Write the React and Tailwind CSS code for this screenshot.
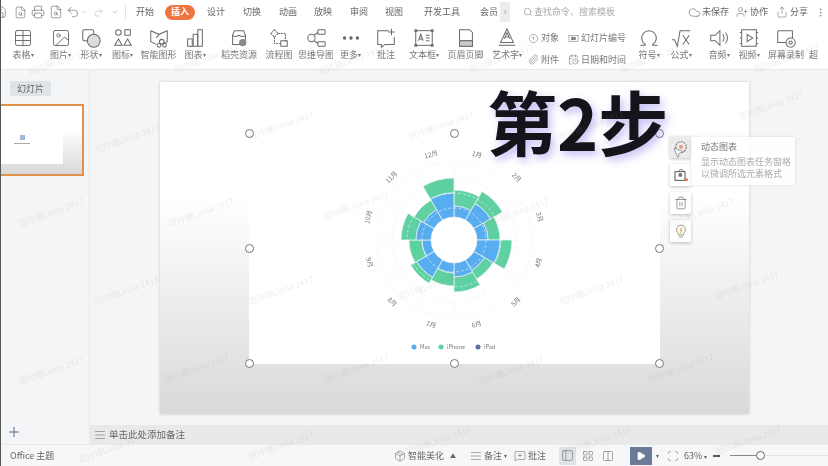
import React from "react";
import { Save, Printer, FileSearch, Undo2, Redo2, ChevronDown, Search, Cloud, UserPlus, Share, MoreVertical, Plus, AlignJustify, Play, Trash2, Table, Image, Omega, MessageSquarePlus, Columns2, LayoutGrid, PanelLeft, Scan, Paperclip, CalendarClock, Package, MousePointer2 } from "lucide-react";

const font = { fontFamily: '"Noto Sans CJK SC","Liberation Sans",sans-serif' };
const S = ({ children, size = 22 }) => (
  <svg width={size} height={size} viewBox="0 0 24 24" fill="none" stroke="#6a6a6a" strokeWidth="1.1">{children}</svg>
);
const L = ({ I, size = 20, cls = "" }) => <I size={size} strokeWidth={1.1} color="#666" className={cls} />;

const icons = {
  shape: <S><rect x="3" y="3" width="12" height="12" rx="1.5" /><circle cx="15" cy="15" r="7" fill="#ddd" /></S>,
  glyphs: <S><circle cx="7" cy="6" r="3" /><rect x="14" y="3" width="6" height="6" /><path d="M7 13l4 7H3zM17 13l4 7h-8z" /></S>,
  smart: <S><path d="M3 4l9 4 9-4v12l-6 3M3 4v12l6 3M12 8l-3 4" /><circle cx="15" cy="16" r="2.5" /><circle cx="12" cy="20" r="2" /><circle cx="18" cy="20" r="2" /></S>,
  bars: <S><rect x="4" y="13" width="5" height="8" /><rect x="10" y="8" width="5" height="13" /><rect x="15" y="3" width="5" height="18" /></S>,
  shell: <S><path d="M5 9l2-5h10l2 5v10H5zM5 9c2 2 4 2 7 0 3 2 5 2 7 0" /><circle cx="16" cy="17" r="4" fill="#8a8a8a" stroke="none" /></S>,
  flow: <S><path d="M7 3l4 4-4 4-4-4zM11 7h8v9M7 11v7h8" strokeDasharray="2 1" /><rect x="14" y="15" width="7" height="6" /></S>,
  mind: <S><circle cx="7" cy="12" r="4" /><rect x="14" y="3" width="8" height="5" rx="1" /><rect x="14" y="16" width="8" height="5" rx="1" /><path d="M10 9l4-3M10 15l4 3" /></S>,
  more: <S><circle cx="5" cy="12" r="1.3" fill="#666" /><circle cx="12" cy="12" r="1.3" fill="#666" /><circle cx="19" cy="12" r="1.3" fill="#666" /></S>,
  note: <S><path d="M15 4H3v15h4v3l4-3h10v-8M18 2v7M14.5 5.5h7" /></S>,
  textbox: <S><rect x="3" y="4" width="18" height="16" /><path d="M6 15l2.5-7 2.5 7M7 13h3M14 9h4M14 12h4M14 15h4" /><path d="M2 3h2v2H2zM20 3h2v2h-2zM2 19h2v2H2zM20 19h2v2h-2z" /></S>,
  header: <S><path d="M5 3h11l3 3v15H5zM5 15h14" /><rect x="5" y="15" width="14" height="6" fill="#ccc" /></S>,
  art: <S><path d="M12 2L5 17h14zM9 13l3-7 3 7M10 11h4M3 20h18M5 17h14" /></S>,
  sqrt: <S><path d="M2 14h3l3 7 3-17h11M14 9l7 10M21 9l-7 10" /></S>,
  video: <S><rect x="4" y="3" width="16" height="18" /><path d="M10 8l6 4-6 4z" /><path d="M2 6h2M2 12h2M2 18h2M20 6h2M20 12h2M20 18h2" /></S>,
  record: <S><path d="M3 5a1 1 0 011-1h15v8M3 5v12h9" /><circle cx="17" cy="17" r="5" /><circle cx="17" cy="17" r="1.8" /></S>,
  speaker: <S><path d="M3 9h5l5-5v16l-5-5H3zM16 8c2 2 2 6 0 8M19 6c3 3 3 9 0 12" /></S>,
};

const ribbon = [
  { w: "w-[32px]", i: <L I={Table} size={20} />, t: "表格", d: 1 },
  { w: "w-[37px]", cls: "pl-[6px]", i: <L I={Image} size={20} />, t: "图片", d: 1 },
  { w: "w-[30px]", i: icons.shape, t: "形状", d: 1 },
  { w: "w-[33px]", i: icons.glyphs, t: "图标", d: 1 },
  { w: "w-[39px]", i: icons.smart, t: "智能图形" },
  { w: "w-[34px]", i: icons.bars, t: "图表", d: 1 },
  { w: "w-[47px]", i: icons.shell, t: "稻壳资源", cls: "pl-[7px]" },
  { w: "w-[40px]", i: icons.flow, t: "流程图" },
  { w: "w-[34px]", i: icons.mind, t: "思维导图" },
  { w: "w-[35px]", i: icons.more, t: "更多", d: 1 },
  { w: "w-[36px]", i: icons.note, t: "批注" },
  { w: "w-[40px]", i: icons.textbox, t: "文本框", d: 1 },
  { w: "w-[43px]", i: icons.header, t: "页眉页脚" },
  { w: "w-[40px]", i: icons.art, t: "艺术字", d: 1 },
];
const ribbon2 = [
  { w: "w-[32px]", i: <L I={Omega} size={22} />, t: "符号", d: 1 },
  { w: "w-[32px]", i: icons.sqrt, t: "公式", d: 1 },
  { w: "w-[38px]", i: icons.speaker, t: "音频", d: 1, cls: "pl-[6px]" },
  { w: "w-[28px]", i: icons.video, t: "视频", d: 1 },
  { w: "w-[46px]", i: icons.record, t: "屏幕录制" },
  { w: "w-[16px]", cls: "!items-start", i: <span />, t: "超" },
];

const tabs = [
  ["设计", "w-[36px]"], ["切换", "w-[36px]"], ["动画", "w-[35px]"],
  ["放映", "w-[36px]"], ["审阅", "w-[35px]"], ["视图", "w-[36px]"],
];

const RItem = ({ it }) => (
  <div className={`${it.w} ${it.cls || ""} shrink-0 flex flex-col items-center overflow-hidden`}>
    <div className="h-[20px] flex items-center justify-center">{it.i}</div>
    <div className="mt-[1px] text-[9px] leading-[12px] text-[#777] whitespace-nowrap">
      {it.t}{it.d ? <span className="text-[6px] align-top">▾</span> : null}
    </div>
  </div>
);

const data = [[34, 50], [42, 56], [34, 46], [46, 58], [35, 45], [37, 52], [33, 46], [43, 50], [32, 45], [38, 53], [35, 46], [47, 62]];
const CX = 205, CY = 107, R0 = 23;
const pt = (r, a) => {
  const t = ((a - 90) * Math.PI) / 180;
  return [CX + r * Math.cos(t), CY + r * Math.sin(t)];
};
const sector = (r0, r1, a0, a1) => {
  const [x0, y0] = pt(r0, a0), [x1, y1] = pt(r1, a0), [x2, y2] = pt(r1, a1), [x3, y3] = pt(r0, a1);
  return `M${x0} ${y0}L${x1} ${y1}A${r1} ${r1} 0 0 1 ${x2} ${y2}L${x3} ${y3}A${r0} ${r0} 0 0 0 ${x0} ${y0}Z`;
};
const months = ["1月", "2月", "3月", "4月", "5月", "6月", "7月", "8月", "9月", "10月", "11月", "12月"];

const Chart = () => (
  <svg width="411" height="231" viewBox="0 0 411 231" className="block">
    {[62, 78].map((r) => (
      <circle key={r} cx={CX} cy={CY} r={r} fill="none" stroke="#eef5f2" strokeWidth="0.8" strokeDasharray="3 2" />
    ))}
    {months.map((m, i) => {
      const [a, b] = pt(R0, i * 30), [c, d] = pt(78, i * 30);
      return <line key={m} x1={a} y1={b} x2={c} y2={d} stroke="#eef5f2" strokeWidth="0.8" strokeDasharray="3 2" />;
    })}
    {data.map(([b, g], i) => (
      <g key={i} stroke="#f2f7f5" strokeWidth="0.7">
        <path d={sector(b, g, i * 30, (i + 1) * 30)} fill="#5fd0a2" />
        <path d={sector(R0, b, i * 30, (i + 1) * 30)} fill="#58acf0" />
      </g>
    ))}
    {[32, 47].map((r) => (
      <circle key={r} cx={CX} cy={CY} r={r} fill="none" stroke="#ffffff" strokeOpacity="0.75" strokeWidth="0.7" strokeDasharray="3 2" />
    ))}
    {months.map((m, i) => {
      const a = i * 30 + 15;
      const [x, y] = pt(88, a);
      const rot = a > 90 && a < 270 ? a - 180 : a;
      return (
        <text key={m} x={x} y={y} fontSize="6.5" fill="#777" textAnchor="middle" dominantBaseline="middle" transform={`rotate(${rot} ${x} ${y})`}>
          {m}
        </text>
      );
    })}
    <circle cx="165" cy="214" r="2.5" fill="#58acf0" />
    <text x="171" y="216" fontSize="5.5" fill="#777">Mac</text>
    <circle cx="192" cy="214" r="2.5" fill="#5fd0a2" />
    <text x="198" y="216" fontSize="5.5" fill="#777">iPhone</text>
    <circle cx="229" cy="214" r="2.5" fill="#5a6f9c" />
    <text x="235" y="216" fontSize="5.5" fill="#777">iPad</text>
  </svg>
);

const Handle = ({ cls }) => (
  <div className={`absolute w-[9px] h-[9px] rounded-full bg-white border border-[#777] ${cls}`} />
);

const Tool = ({ children, cls = "bg-white" }) => (
  <div className={`w-[21px] h-[22px] flex items-center justify-center shadow-[0_1px_3px_rgba(0,0,0,0.25)] ${cls}`}>{children}</div>
);

const marks = [
  [60, 60], [205, 58], [350, 60], [500, 58], [650, 58], [785, 58],
  [126, 138], [280, 125], [440, 125], [590, 125], [770, 105],
  [50, 212], [200, 212], [355, 205], [515, 212], [700, 212],
  [125, 290], [280, 290], [430, 285], [590, 290], [745, 285],
  [50, 370], [195, 368], [355, 368], [510, 370], [680, 368],
  [110, 448], [280, 445], [437, 440], [597, 440], [747, 440],
];

export default function App() {
  return (
    <div style={font} className="relative w-[828px] h-[466px] overflow-hidden bg-[#f4f5f7] border-l border-[#555] flex flex-col blur-[0.6px]">
      {/* title bar */}
      <div className="h-[24px] shrink-0 flex items-center bg-white text-[9px] text-[#666]">
        <div className="w-[143px] shrink-0 flex items-center -ml-[8px]">
          <L I={Save} size={14} />
          <L I={FileSearch} size={13} cls="ml-[7px]" />
          <L I={Printer} size={14} cls="ml-[4px]" />
          <L I={FileSearch} size={14} cls="ml-[4px]" />
          <L I={Undo2} size={14} cls="ml-[3px]" />
          <L I={ChevronDown} size={6} cls="ml-[1px]" />
          <L I={Redo2} size={11} cls="opacity-50 ml-[6px]" />
          <L I={ChevronDown} size={8} cls="ml-[7px]" />
          <div className="h-[14px] border-l border-[#e2e2e2] ml-[6px]" />
        </div>
        <div className="w-[29px] shrink-0">开始</div>
        <div className="w-[30px] h-[15px] shrink-0 rounded-full bg-[#f0743f] text-white font-bold flex items-center justify-center">插入</div>
        <div className="w-[12px] shrink-0" />
        {tabs.map(([t, w]) => (
          <div key={t} className={`${w} shrink-0`}>{t}</div>
        ))}
        <div className="w-[3px] shrink-0" />
        <div className="w-[56px] shrink-0">开发工具</div>
        <div className="w-[20px] shrink-0 whitespace-nowrap overflow-hidden">会员</div>
        <div className="w-[10px] h-[20px] shrink-0 bg-[#ececec] flex items-center justify-center text-[#888]">›</div>
        <div className="w-[13px] shrink-0" />
        <div className="w-[165px] shrink-0 flex items-center gap-[1px] text-[#aaa]">
          <L I={Search} size={10} />
          查找命令、搜索模板
        </div>
        <div className="w-[48px] shrink-0 flex items-center gap-[1px]"><L I={Cloud} size={13} />未保存</div>
        <div className="w-[40px] shrink-0 flex items-center gap-[2px]"><L I={UserPlus} size={12} />协作</div>
        <div className="w-[39px] shrink-0 flex items-center gap-[2px]"><L I={Share} size={12} />分享</div>
        <L I={MoreVertical} size={11} />
      </div>

      {/* ribbon */}
      <div className="h-[46px] shrink-0 flex pl-[6px] pt-[4px] bg-white border-b border-[#e8e8e8]">
        {ribbon.map((it) => <RItem key={it.t} it={it} />)}
        <div className="w-[101px] shrink-0 pl-[1px] grid grid-cols-[40px_60px] grid-rows-2 text-[9px] leading-[12px] text-[#777] pt-[1px] gap-y-[3px]">
          <div className="flex items-center gap-[2px]">
            <S size={11}><circle cx="12" cy="12" r="9" /><path d="M8 12l4-4v8" /></S>对象
          </div>
          <div className="flex items-center gap-[2px]">
            <S size={11}><rect x="2" y="5" width="20" height="14" /><rect x="8" y="9" width="8" height="6" fill="#888" /></S>幻灯片编号
          </div>
          <div className="flex items-center gap-[2px]"><L I={Paperclip} size={11} />附件</div>
          <div className="flex items-center gap-[2px]"><L I={CalendarClock} size={11} />日期和时间</div>
        </div>
        <div className="w-[5px] shrink-0" />
        {ribbon2.map((it) => <RItem key={it.t} it={it} />)}
      </div>

      {/* main */}
      <div className="flex-1 min-h-0 flex">
        <div className="w-[89px] shrink-0 flex flex-col border-r border-[#e8eaec]">
          <div className="pl-[9px] pt-[11px]">
            <div className="w-[41px] h-[15px] rounded-[2px] bg-[#dfe3e8] text-[9px] text-[#666] flex items-center justify-center">幻灯片</div>
          </div>
          <div className="mt-[8px] w-[83px] h-[72px] border-2 border-l-0 border-[#e2914d] bg-gradient-to-b from-white from-35% to-[#d8d8d8] pt-[12px]">
            <div className="w-[62px] h-[46px] bg-white flex flex-col items-center pt-[17px] pr-[20px]">
              <div className="w-[5px] h-[5px] bg-[#9db8d8]" />
              <div className="w-[16px] h-px bg-[#aaa] mt-[3px]" />
            </div>
          </div>
          <div className="flex-1" />
          <div className="h-[25px] pl-[5px] flex items-center">
            <Plus size={16} strokeWidth={1.4} color="#55607a" />
          </div>
        </div>

        <div className="flex-1 min-w-0 flex flex-col">
          <div className="flex-1 min-h-0 pl-[70px] pt-[12px]">
            <div className="relative w-[589px] h-[332px] bg-gradient-to-b from-white from-35% to-[#d9d9d9] shadow-[0_0_3px_rgba(0,0,0,0.18)] pt-[51px] pl-[89px]">
              <div className="relative w-[411px] h-[231px] bg-white">
                <Chart />
                <Handle cls="-left-[4px] -top-[4px]" />
                <Handle cls="left-[201px] -top-[4px]" />
                <Handle cls="-right-[4px] -top-[4px]" />
                <Handle cls="-left-[4px] top-[111px]" />
                <Handle cls="-right-[4px] top-[111px]" />
                <Handle cls="-left-[4px] -bottom-[4px]" />
                <Handle cls="left-[201px] -bottom-[4px]" />
                <Handle cls="-right-[4px] -bottom-[4px]" />
              </div>
              <div className="absolute left-[327px] top-[-8px] text-[70px] leading-[94px] font-bold text-[#14141a] whitespace-nowrap [text-shadow:3px_4px_8px_rgba(120,110,230,0.45)]">
                第2步
              </div>
              <div className="absolute left-[510px] top-[54px] flex flex-col gap-[6px]">
                <Tool cls="bg-[#ececec]">
                  <S size={16}>
                    <circle cx="12" cy="12" r="8" strokeDasharray="3 1.5" strokeWidth="2" stroke="#888" />
                    <circle cx="12" cy="12" r="3" fill="#e89a7a" stroke="none" />
                  </S>
                </Tool>
                <Tool>
                  <S size={16}>
                    <rect x="3" y="7" width="15" height="13" stroke="#555" strokeWidth="1.5" />
                    <circle cx="11" cy="12" r="3" fill="#777" stroke="none" />
                    <circle cx="20" cy="19" r="2.5" fill="#e8735a" stroke="none" />
                    <path d="M8 7l2-3h4l2 3" stroke="#555" />
                  </S>
                </Tool>
                <Tool><Trash2 size={14} strokeWidth={1.1} color="#666" /></Tool>
                <Tool>
                  <S size={16}>
                    <path d="M12 3a7 7 0 00-4 12.5V18h8v-2.5A7 7 0 0012 3zM9 21h6" stroke="#777" />
                    <path d="M13 6l-3 5h4l-3 5z" fill="#eec22e" stroke="#d9a81a" strokeWidth="0.5" />
                  </S>
                </Tool>
              </div>
              <div className="absolute left-[531px] top-[55px] w-[104px] h-[48px] bg-white/85 shadow-[0_0_3px_rgba(0,0,0,0.12)] pl-[10px] pt-[4px] text-[9px] leading-[12px] text-[#aaa]">
                <div className="text-[#777] mb-[3px]">动态图表</div>
                <div>显示动态图表任务窗格</div>
                <div>以微调所选元素格式</div>
              </div>
              <MousePointer2 size={13} strokeWidth={1} color="#444" fill="#fff" className="absolute left-[512px] top-[64px]" />
            </div>
          </div>
          <div className="h-[19px] shrink-0 bg-[#e9e9ea] flex items-center pl-[4px] gap-[3px] text-[9.5px] text-[#666]">
            <L I={AlignJustify} size={12} />
            单击此处添加备注
          </div>
        </div>
      </div>

      {/* status */}
      <div className="h-[22px] shrink-0 flex items-center bg-[#f6f7f9] border-t border-[#e8eaec] text-[9px] text-[#666]">
        <div className="w-[393px] shrink-0 pl-[9px]">Office 主题</div>
        <div className="w-[76px] shrink-0 flex items-center gap-[2px]"><L I={Package} size={12} />智能美化<span className="text-[6px] ml-[4px]">▲</span></div>
        <div className="w-[44px] shrink-0 flex items-center gap-[2px]"><L I={AlignJustify} size={12} />备注<span className="text-[6px]">▾</span></div>
        <div className="w-[45px] shrink-0 flex items-center gap-[2px]"><L I={MessageSquarePlus} size={12} />批注</div>
        <div className="w-[17px] h-[18px] shrink-0 bg-[#dfe2e7] flex items-center justify-center"><L I={PanelLeft} size={13} /></div>
        <div className="w-[21px] shrink-0 flex justify-center pl-[3px]"><L I={LayoutGrid} size={12} /></div>
        <div className="w-[21px] shrink-0 flex justify-center"><L I={Columns2} size={12} /></div>
        <div className="w-[12px] shrink-0" />
        <div className="w-[22px] h-[18px] shrink-0 bg-[#6c7a99] flex items-center justify-center">
          <Play size={10} color="#fff" fill="#fff" />
        </div>
        <div className="w-[15px] shrink-0 text-[6px] pl-[4px]">▾</div>
        <div className="w-[17px] shrink-0"><L I={Scan} size={12} /></div>
        <div className="w-[29px] shrink-0 whitespace-nowrap">63%<span className="text-[6px]"> ▾</span></div>
        <div className="w-[7px] h-[2px] bg-[#555] shrink-0" />
        <div className="w-[10px] shrink-0" />
        <div className="w-[26px] h-px bg-[#888] shrink-0" />
        <div className="w-[9px] h-[9px] rounded-full border border-[#666] bg-white shrink-0" />
        <div className="w-[63px] h-px bg-[#e4e4e4] shrink-0" />
      </div>

      {/* watermarks */}
      {marks.map(([x, y]) => (
        <div
          key={`${x}-${y}`}
          className="absolute -translate-x-1/2 -translate-y-1/2 -rotate-[20deg] text-[8.5px] text-[#8a8a8a]/15 whitespace-nowrap pointer-events-none"
          style={{ left: x, top: y }}
        >
          范玲珊Linna 2417
        </div>
      ))}
    </div>
  );
}
